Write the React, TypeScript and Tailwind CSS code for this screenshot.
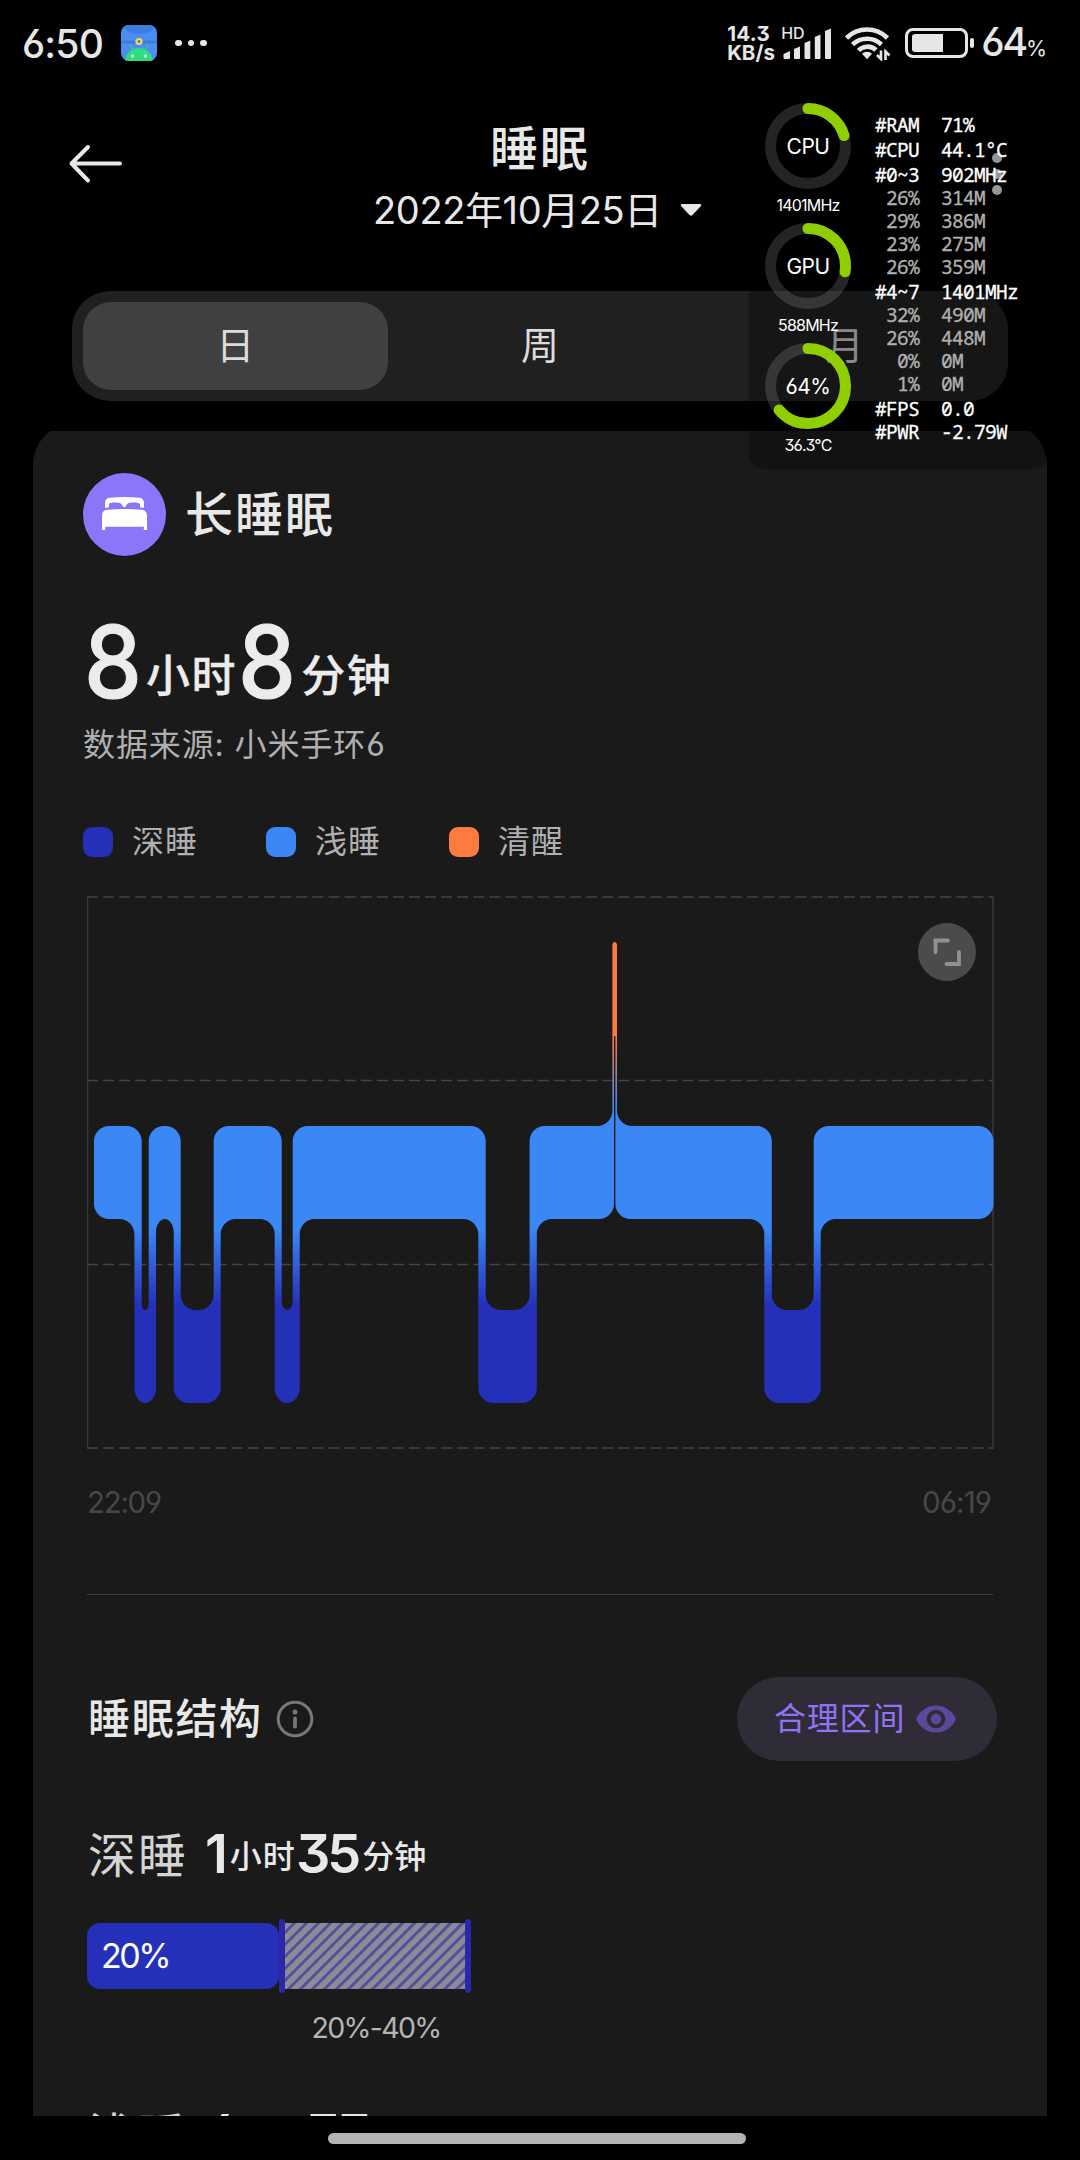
import React from "react";

type Point = [number, number];

const OVERLAY_ROWS: { label: string; value: string; head?: boolean; gap?: boolean }[] = [
  { label: "#RAM", value: "71%", head: true, gap: true },
  { label: "#CPU", value: "44.1°C", head: true, gap: true },
  { label: "#0~3", value: "902MHz", head: true, gap: true },
  { label: "26%", value: "314M" },
  { label: "29%", value: "386M" },
  { label: "23%", value: "275M" },
  { label: "26%", value: "359M" },
  { label: "#4~7", value: "1401MHz", head: true, gap: true },
  { label: "32%", value: "490M" },
  { label: "26%", value: "448M" },
  { label: "0%", value: "0M" },
  { label: "1%", value: "0M" },
  { label: "#FPS", value: "0.0", head: true, gap: true },
  { label: "#PWR", value: "-2.79W", head: true },
];

const GAUGES = [
  { title: "CPU", caption: "1401MHz", part: 0.205 },
  { title: "GPU", caption: "588MHz", part: 0.275 },
  { title: "64%", caption: "36.3°C", part: 0.64 },
];

/* Outline of the sleep stages, in chart coordinates (origin 87, 896). */
const OUTLINE: Point[] = [
  [7, 230], [54.7, 230], [54.7, 414], [61.7, 414], [61.7, 230], [93.7, 230], [93.7, 414],
  [126.7, 414], [126.7, 230], [194.7, 230], [194.7, 414], [205.7, 414], [205.7, 230],
  [398.7, 230], [398.7, 414], [442.6, 414], [442.6, 230],
  [525.4, 230], [525.4, 46], [530, 46], [530, 230],
  [684.8, 230], [684.8, 414], [726.7, 414], [726.7, 230], [906.5, 230],
  [906.5, 323], [733.7, 323], [733.7, 507], [677.3, 507], [677.3, 323],
  [528.4, 323], [528.4, 140], [527, 140], [527, 323],
  [449.8, 323], [449.8, 507], [391.3, 507], [391.3, 323],
  [212.7, 323], [212.7, 507], [187.7, 507], [187.7, 323],
  [133.7, 323], [133.7, 507], [86.7, 507], [86.7, 323],
  [69, 323], [69, 507], [47.4, 507], [47.4, 323], [7, 323],
];

function roundedPath(points: Point[], radius: number): string {
  const n = points.length;
  const dist = (a: Point, b: Point) => Math.hypot(b[0] - a[0], b[1] - a[1]);
  const toward = (from: Point, to: Point, r: number): Point => {
    const len = dist(from, to);
    const d = Math.min(r, len / 2);
    return [from[0] + ((to[0] - from[0]) * d) / len, from[1] + ((to[1] - from[1]) * d) / len];
  };
  let d = "";
  for (let i = 0; i < n; i++) {
    const p = points[i];
    const prev = points[(i + n - 1) % n];
    const next = points[(i + 1) % n];
    const r = Math.min(radius, Math.min(dist(p, prev), dist(p, next)) * 0.75);
    const a = toward(p, prev, r);
    const b = toward(p, next, r);
    const k = 0.55;
    const c1 = [a[0] + (p[0] - a[0]) * k, a[1] + (p[1] - a[1]) * k];
    const c2 = [b[0] + (p[0] - b[0]) * k, b[1] + (p[1] - b[1]) * k];
    d += `${i === 0 ? "M" : "L"}${a[0]} ${a[1]}C${c1[0]} ${c1[1]} ${c2[0]} ${c2[1]} ${b[0]} ${b[1]}`;
  }
  return d + "Z";
}

function StatusBar() {
  return (
    <div className="flex h-[86px] shrink-0 items-center pl-[22px] pr-[33px] text-[#e6e6e6]">
      <span className="w-[99px] text-[39px] font-medium leading-none tracking-[-0.8px]">6:50</span>
      <svg width="36" height="36" viewBox="0 0 36 36">
        <defs>
          <clipPath id="app">
            <rect width="36" height="36" rx="8" />
          </clipPath>
        </defs>
        <g clipPath="url(#app)">
          <rect width="36" height="36" fill="#4c8df0" />
          <path d="M2 0h32c-3 12-29 12-32 0Z" fill="#3f7ce0" />
          <path d="M0 17h36" stroke="#3f7ad8" strokeWidth="2.5" />
          <path d="M9 20l4 6M27 20l-4 6" stroke="#2fd083" strokeWidth="1.3" />
          <path d="M4 37a14 14 0 0 1 28 0Z" fill="#2fdc80" />
          <circle cx="11.5" cy="31" r="1.7" fill="#b8f7d6" />
          <circle cx="24.5" cy="31" r="1.7" fill="#b8f7d6" />
          <circle cx="18" cy="16.5" r="3.6" fill="#f1d27b" />
          <circle cx="18" cy="16.5" r="1.3" fill="#6b6444" />
        </g>
      </svg>
      <div className="ml-[18px] flex gap-[6px]">
        <i className="size-[6.5px] rounded-full bg-[#e6e6e6]" />
        <i className="size-[6.5px] rounded-full bg-[#e6e6e6]" />
        <i className="size-[6.5px] rounded-full bg-[#e6e6e6]" />
      </div>
      <div className="ml-auto flex items-center">
        <div className="w-[54px] text-[20.500px] font-bold leading-[19px]">
          <div className="tracking-[0.300px]">14.3</div>
          <div>KB/s</div>
        </div>
        <div className="relative h-[34px] w-[52px]">
          <span className="absolute left-0 top-[-1px] text-[16px] font-medium leading-[16px]">HD</span>
          <svg className="absolute left-0 top-0" width="52" height="34" viewBox="0 0 52 34" fill="#e6e6e6">
            <path d="M2.5 28l6.500-3v7a1 1 0 0 1-1 1h-4.500a1.500 1.500 0 0 1-1-1.500Z" />
            <path d="M13 23l6-2.500v11.500a1 1 0 0 1-1 1h-4a1 1 0 0 1-1-1Z" />
            <path d="M23.500 17l5.800-2.500v17.500a1 1 0 0 1-1 1h-3.800a1 1 0 0 1-1-1Z" />
            <path d="M33.800 11l5.700-2.500v23.500a1 1 0 0 1-1 1h-3.700a1 1 0 0 1-1-1Z" />
            <path d="M44 5l6-2.500v29.500a1 1 0 0 1-1 1h-4a1 1 0 0 1-1-1Z" />
          </svg>
        </div>
        <svg className="ml-[11px]" width="48" height="36" viewBox="0 0 48 36" fill="none" stroke="#e6e6e6" strokeWidth="4.600">
          <path d="M2.500 13a29 29 0 0 1 41 0" />
          <path d="M8.500 19.500a21 21 0 0 1 29 0" />
          <path d="M14.500 25.500a12.500 12.500 0 0 1 17.500-.500" />
          <path d="M23 26.800c2 0 3.800.8 5 2l-5 5.500-5-5.500c1.200-1.200 3-2 5-2Z" fill="#e6e6e6" stroke="none" />
          <path d="M37 25.500v8.500l-4-4M41.500 35v-8.500l4 4" strokeWidth="2.600" />
        </svg>
        <div className="ml-[13px] flex h-[30px] w-[63px] items-center rounded-[8px] border-[3px] border-[#e6e6e6] pl-[4px]">
          <div className="h-[18px] w-[31px] rounded-l-[3px] bg-[#e6e6e6]" />
        </div>
        <div className="ml-[2px] h-[10px] w-[4px] rounded-[2px] bg-[#e6e6e6]" />
        <div className="ml-[7px] flex items-baseline leading-none">
          <span className="text-[39.500px] font-medium tracking-[-2.300px]">64</span>
          <span className="text-[21.500px]">%</span>
        </div>
      </div>
    </div>
  );
}

function Header() {
  return (
    <div className="relative flex h-[205px] shrink-0 flex-col items-center pt-[32px] text-[#e8e8e8]">
      <svg className="absolute left-[68px] top-[58px]" width="56" height="40" viewBox="0 0 56 40" fill="none" stroke="#e8e8e8" strokeWidth="4" strokeLinecap="round" strokeLinejoin="round">
        <path d="M52 19.500H4M20 3L3.500 19.500L20 36.500" />
      </svg>
      <div className="h-[62px] text-[48px] font-medium leading-[62px] tracking-[2px]">睡眠</div>
      <div className="mr-[5px] mt-[5px] flex h-[50px] items-center">
        <span className="text-[38px] leading-[50px] tracking-[-0.400px]">2022年10月25日</span>
        <svg className="ml-[18px]" width="22" height="14" viewBox="0 0 22 14">
          <path d="M2 1h18q2 .5.700 2.200L12.500 12q-1.500 1.500-3 0L1.300 3.200Q0 1.500 2 1Z" fill="#e8e8e8" />
        </svg>
      </div>
      <div className="absolute left-[992px] top-[67px] flex flex-col gap-[6px]">
        <i className="size-[10px] rounded-full bg-[#d8d8d8]" />
        <i className="size-[10px] rounded-full bg-[#d8d8d8]" />
        <i className="size-[10px] rounded-full bg-[#d8d8d8]" />
      </div>
    </div>
  );
}

function Tabs() {
  return (
    <div className="mx-[72px] flex h-[110px] shrink-0 rounded-[38px] bg-[#202020] p-[11px] text-[38px] leading-none text-[#dcdcdc]">
      <div className="flex flex-1 items-center justify-center rounded-[28px] bg-[#404040] pb-[2px]">日</div>
      <div className="flex flex-1 items-center justify-center pb-[2px]">周</div>
      <div className="flex flex-1 items-center justify-center pb-[2px] text-[#c4c4c4]">月</div>
    </div>
  );
}

function SleepChart() {
  return (
    <div className="relative ml-[54px] h-[554px] w-[907px]">
      <svg width="907" height="554" viewBox="0 0 907 554">
        <defs>
          <linearGradient id="stage" gradientUnits="userSpaceOnUse" x1="0" y1="46" x2="0" y2="507">
            <stop offset="0" stopColor="#ff7a3d" />
            <stop offset="0.2" stopColor="#ff7a3d" />
            <stop offset="0.37" stopColor="#3b87f6" />
            <stop offset="0.62" stopColor="#3b87f6" />
            <stop offset="0.79" stopColor="#2430b8" />
            <stop offset="1" stopColor="#2430b8" />
          </linearGradient>
        </defs>
        <g stroke="#444444" strokeWidth="1.500" strokeDasharray="11 5.100">
          <path d="M0 1H906M0 184.500H906M0 368.500H906M0 552H906" />
        </g>
        <path d="M.5 0V553M906 0V553" stroke="#383a3a" strokeWidth="1.500" />
        <path d={roundedPath(OUTLINE, 15)} fill="url(#stage)" />
      </svg>
      <svg className="absolute left-[831px] top-[27px]" width="58" height="58" viewBox="0 0 58 58">
        <circle cx="29" cy="29" r="29" fill="#4b4b4b" />
        <path d="M17.500 29V17.500H30M41 29V41H28.500" fill="none" stroke="#919191" strokeWidth="3.800" strokeLinecap="round" />
      </svg>
    </div>
  );
}

function StageTitle({ name, hours, minutes }: { name: string; hours: string; minutes: string }) {
  return (
    <div className="ml-[55px] h-[60px] whitespace-nowrap text-[54px] font-semibold leading-[60px] text-[#e8e8e8]">
      <span className="text-[48px] font-normal leading-none tracking-[2px] text-[#d4d4d4]">{name}</span>
      <span className="ml-[17px] leading-none tracking-[-2px]">{hours}</span>
      <span className="ml-[4px] align-[5px] text-[32px] font-medium leading-none tracking-[1px]">小时</span>
      <span className="leading-none tracking-[-3px]">{minutes}</span>
      <span className="ml-[4px] align-[5px] text-[32px] font-medium leading-none tracking-[0px]">分钟</span>
    </div>
  );
}

function SleepCard() {
  return (
    <div className="mx-[33px] mt-[30px] h-[1685px] shrink-0 overflow-hidden">
      <div className="-mt-[8px] h-[1700px] rounded-t-[42px] bg-[#1a1a1a] pt-[50px]">
        <div className="ml-[50px] flex h-[83px] items-center">
          <svg width="83" height="83" viewBox="0 0 83 83">
            <circle cx="41.500" cy="41.500" r="41.500" fill="#8b76fa" />
            <g fill="#fff">
              <path d="M22 35v-5c0-3 1.500-4.800 4.500-5.200C36 23.700 47 23.700 56.500 24.800c3 .4 4.500 2.200 4.500 5.200v5l-4-.8v-2.500c0-1-.8-1.600-2-1.800-3-.5-6.500-.6-9 0-1.600.4-2.200 1.200-2.700 2.300L42.500 34h-2l-1.300-1.800c-.5-1.100-1.100-1.900-2.700-2.300-2.500-.6-6-.5-9 0-1.200.2-1.500.8-1.500 1.800v2.500Z" />
              <path d="M19 57V43c0-4 1.800-6 5.500-6.300 11-1 23-1 34 0 3.700.3 5.500 2.300 5.500 6.300v14h-3.200v-3.200H22.200V57Z" />
            </g>
          </svg>
          <span className="ml-[19px] text-[48px] font-medium leading-none tracking-[2px] text-[#e8e8e8]">长睡眠</span>
        </div>
        <div className="ml-[51px] mt-[56px] h-[100px] whitespace-nowrap text-[100px] font-medium leading-[100px] text-[#ececec]">
          <span className="inline-block w-[62px] origin-left scale-x-[0.92] leading-none [-webkit-text-stroke:1px]">8</span>
          <span className="align-[6px] text-[44px] font-medium leading-none tracking-[1.600px] [-webkit-text-stroke:0.3px]">小时</span>
          <span className="inline-block w-[62px] origin-left scale-x-[0.92] pl-[1px] leading-none [-webkit-text-stroke:1px]">8</span>
          <span className="ml-[2px] align-[6px] text-[44px] font-medium leading-none tracking-[1.600px] [-webkit-text-stroke:0.3px]">分钟</span>
        </div>
        <div className="ml-[50px] mt-[13px] h-[40px] text-[32px] leading-[40px] tracking-[0.900px] text-[#b0b0b0]">数据来源: 小米手环6</div>
        <div className="ml-[50px] mt-[57px] flex h-[40px] items-center text-[32px] leading-[40px] tracking-[1px] text-[#b0b0b0]">
          <i className="size-[30px] rounded-[9px] bg-[#2430b8]" />
          <span className="ml-[19px] w-[134px]">深睡</span>
          <i className="size-[30px] rounded-[9px] bg-[#3b87f6]" />
          <span className="ml-[19px] w-[134px]">浅睡</span>
          <i className="size-[30px] rounded-[9px] bg-[#ff7a3d]" />
          <span className="ml-[19px]">清醒</span>
        </div>
        <div className="h-[34px]" />
        <SleepChart />
        <div className="ml-[54px] mr-[56px] mt-[32px] flex h-[40px] justify-between text-[29.500px] leading-[40px] tracking-[-1.300px] text-[#474747]">
          <span>22:09</span>
          <span className="tracking-[-0.900px]">06:19</span>
        </div>
        <div className="mx-[54px] mt-[72px] h-px bg-[#3e3e3e]" />
        <div className="ml-[55px] mr-[50px] mt-[82px] flex h-[84px] items-center">
          <span className="text-[42px] font-medium leading-none tracking-[1.700px] text-[#e8e8e8]">睡眠结构</span>
          <svg className="ml-[13px]" width="38" height="38" viewBox="0 0 38 38" fill="none" stroke="#777" strokeWidth="3">
            <circle cx="19" cy="19" r="16.800" />
            <circle cx="19" cy="12" r="2.500" fill="#777" stroke="none" />
            <path d="M19 18.500v8" strokeWidth="3.800" strokeLinecap="round" />
          </svg>
          <div className="ml-auto flex h-[84px] w-[260px] items-center rounded-full bg-[#302c37] pl-[37px]">
            <span className="text-[32px] leading-none tracking-[0.800px] text-[#8f73f5]">合理区间</span>
            <svg className="ml-[11px]" width="40" height="28" viewBox="0 0 40 28">
              <path d="M0 14C8-4 32-4 40 14 32 32 8 32 0 14Z" fill="#5b489d" />
              <circle cx="20" cy="14" r="7.300" fill="#5b489d" stroke="#302c37" strokeWidth="4" />
            </svg>
          </div>
        </div>
        <div className="h-[63px]" />
        <StageTitle name="深睡" hours="1" minutes="35" />
        <div className="ml-[54px] mt-[35px] flex h-[74px] items-center">
          <div className="flex h-[66px] w-[192px] items-center rounded-[13px] bg-[#2430b8] pl-[14px] text-[34px] leading-none tracking-[-2.500px] text-white">20%</div>
          <div className="h-[74px] w-[6px] rounded-[3px] bg-[#2a28a8]" />
          <div className="h-[66px] w-[180px] bg-[repeating-linear-gradient(135deg,#8c8a96_0px,#8c8a96_5px,#55519b_5.500px,#55519b_8px,#8c8a96_8.500px)]" />
          <div className="h-[74px] w-[6px] rounded-[3px] bg-[#2a28a8]" />
        </div>
        <div className="ml-[247px] mt-[15px] h-[40px] w-[192px] text-center text-[28.500px] leading-[40px] tracking-[-1.700px] text-[#b4b4b4]">20%-40%</div>
        <div className="h-[56px]" />
        <StageTitle name="浅睡" hours="6" minutes="33" />
      </div>
    </div>
  );
}

function MonitorOverlay() {
  return (
    <div className="absolute left-[749px] top-[88px] flex h-[381px] w-[298px] rounded-[14px] bg-black/30">
      <div className="flex w-[118px] flex-col items-center pt-[15px]">
        {GAUGES.map((g) => (
          <div key={g.title} className="flex h-[120px] flex-col items-center">
            <div className="relative size-[86px]">
              <svg width="86" height="86" viewBox="0 0 86 86" fill="none">
                <circle cx="43" cy="43" r="37.500" stroke="#fff" strokeOpacity="0.14" strokeWidth="11" />
                <circle
                  cx="43"
                  cy="43"
                  r="37.500"
                  stroke="#8fce00"
                  strokeWidth="11"
                  strokeLinecap="round"
                  pathLength="1"
                  strokeDasharray={`${g.part} 2`}
                  transform="rotate(-90 43 43)"
                />
              </svg>
              <span className="absolute inset-0 flex items-center justify-center text-[21px] leading-none tracking-[-0.500px] text-white">{g.title}</span>
            </div>
            <span className="mt-[6px] text-[16px] leading-[20px] tracking-[-0.800px] text-white">{g.caption}</span>
          </div>
        ))}
      </div>
      <div className="-ml-px pt-[23px] font-['Noto_Sans_Mono','DejaVu_Sans_Mono','Liberation_Mono',monospace] text-[19.500px] leading-[23px] tracking-[-0.700px]">
        {OVERLAY_ROWS.map((r, i) => (
          <div key={i} className={`flex ${r.gap ? "pt-[2px]" : ""} ${r.head ? "text-white [-webkit-text-stroke:0.3px]" : "text-[#b0b0b0] [-webkit-text-stroke:0.3px]"}`}>
            <span className="w-[53px] text-right">{r.label}</span>
            <span className="ml-[22px]">{r.value}</span>
          </div>
        ))}
      </div>
    </div>
  );
}

export default function App() {
  return (
    <div className="relative flex h-[2160px] w-[1080px] flex-col overflow-hidden bg-black font-['Inter','Noto_Sans_CJK_SC',sans-serif] [font-feature-settings:'cv03','cv04','cv09']">
      <StatusBar />
      <Header />
      <Tabs />
      <SleepCard />
      <div className="ml-[328px] mt-[17px] h-[11px] w-[418px] shrink-0 rounded-full bg-[#b3b3b3]" />
      <MonitorOverlay />
    </div>
  );
}
